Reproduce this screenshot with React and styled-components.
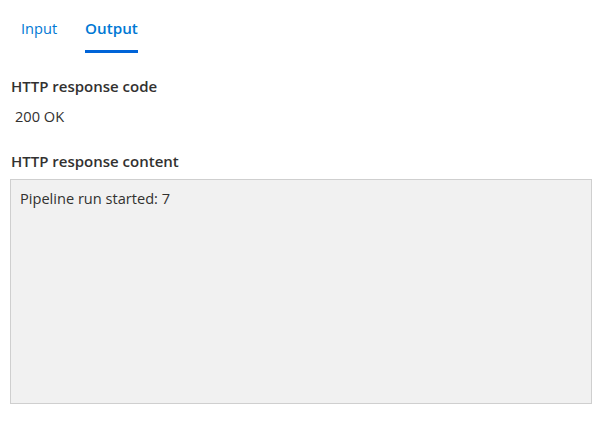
import React from 'react';
import styled, { createGlobalStyle } from 'styled-components';

const Global = createGlobalStyle`
    body {
        margin: 0;
        background: #ffffff;
        font-family: "Open Sans", "Noto Sans", sans-serif;
        color: #323130;
    }
`
const Wrapper = styled.div`
    padding: 0 10px;
`
const Tabs = styled.div`
    display: flex;
    gap: 28px;
    padding: 0 11px;
    height: 53px;
    align-items: stretch;
`
const Tab = styled.div`
    display: flex;
    align-items: center;
    position: relative;
    font-size: ${({ active }) => active ? "15.2px" : "14.6px"};
    font-weight: ${({ active }) => active ? 600 : 400};
    color: #0078d4;
    padding-top: 3px;
    cursor: pointer;

    &::after {
        content: "";
        position: absolute;
        left: 0;
        right: 0;
        bottom: 0;
        height: 3px;
        background: ${({ active }) => active ? "#0064d8" : "transparent"};
    }
`
const Field = styled.div`
    margin-top: ${({ first }) => first ? "23px" : "25px"};
`
const Label = styled.div`
    font-size: 15px;
    font-weight: 600;
    line-height: 20px;
    padding-left: 1px;
`
const Value = styled.div`
    font-size: 14.6px;
    line-height: 20px;
    padding: 10px 5px 0;
`
const Content = styled.div`
    margin-top: 8px;
    height: 225px;
    background: #f1f1f1;
    border: 1px solid #cfcfcf;
    font-size: 14.6px;
    line-height: 20px;
    padding: 8px 9px;
    box-sizing: border-box;
    width: 582px;
`

export default function App() {
    return (
        <Wrapper>
            <Global />
            <Tabs>
                <Tab>Input</Tab>
                <Tab active>Output</Tab>
            </Tabs>
            <Field first>
                <Label>HTTP response code</Label>
                <Value>200 OK</Value>
            </Field>
            <Field>
                <Label>HTTP response content</Label>
                <Content>Pipeline run started: 7</Content>
            </Field>
        </Wrapper>
    );
}
